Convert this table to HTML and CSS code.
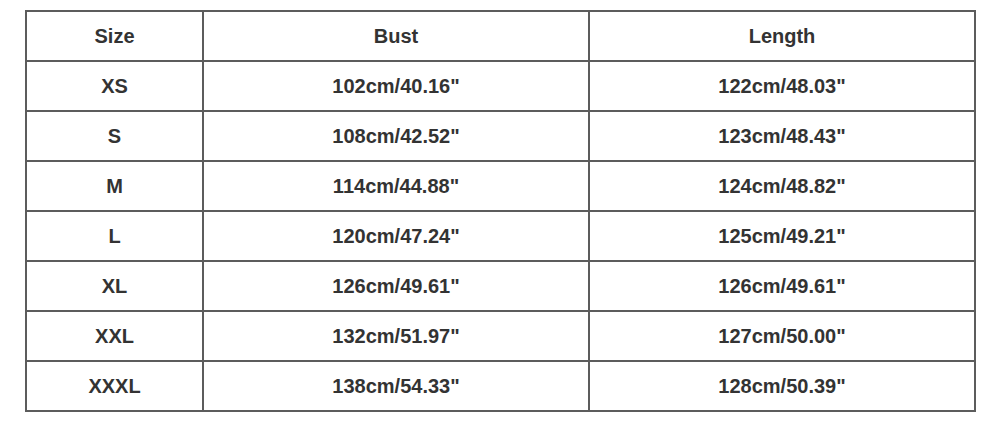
FILE: index.html
```html
<!DOCTYPE html>
<html>
<head>
<meta charset="utf-8">
<link rel="stylesheet" href="styles.css">
</head>
<body>
<table class="size-table">
  <tr><td class="c-size">Size</td><td class="c-val">Bust</td><td class="c-val">Length</td></tr>
  <tr><td>XS</td><td>102cm/40.16"</td><td>122cm/48.03"</td></tr>
  <tr><td>S</td><td>108cm/42.52"</td><td>123cm/48.43"</td></tr>
  <tr><td>M</td><td>114cm/44.88"</td><td>124cm/48.82"</td></tr>
  <tr><td>L</td><td>120cm/47.24"</td><td>125cm/49.21"</td></tr>
  <tr><td>XL</td><td>126cm/49.61"</td><td>126cm/49.61"</td></tr>
  <tr><td>XXL</td><td>132cm/51.97"</td><td>127cm/50.00"</td></tr>
  <tr><td>XXXL</td><td>138cm/54.33"</td><td>128cm/50.39"</td></tr>
</table>
</body>
</html>
```

FILE: styles.css
```css
html, body {
  margin: 0;
  padding: 0;
  background: #ffffff;
}
body {
  padding: 10px 0 0 25px;
  font-family: "Liberation Sans", Arial, sans-serif;
}
.size-table {
  border-collapse: separate;
  border-spacing: 2px;
  background: #5c5c5c;
  table-layout: fixed;
}
.size-table td {
  background: #ffffff;
  height: 48px;
  padding: 0;
  text-align: center;
  vertical-align: middle;
  font-size: 20px;
  font-weight: bold;
  color: #333333;
  line-height: 20px;
}
.size-table .c-size {
  width: 175px;
}
.size-table .c-val {
  width: 384px;
}
```
